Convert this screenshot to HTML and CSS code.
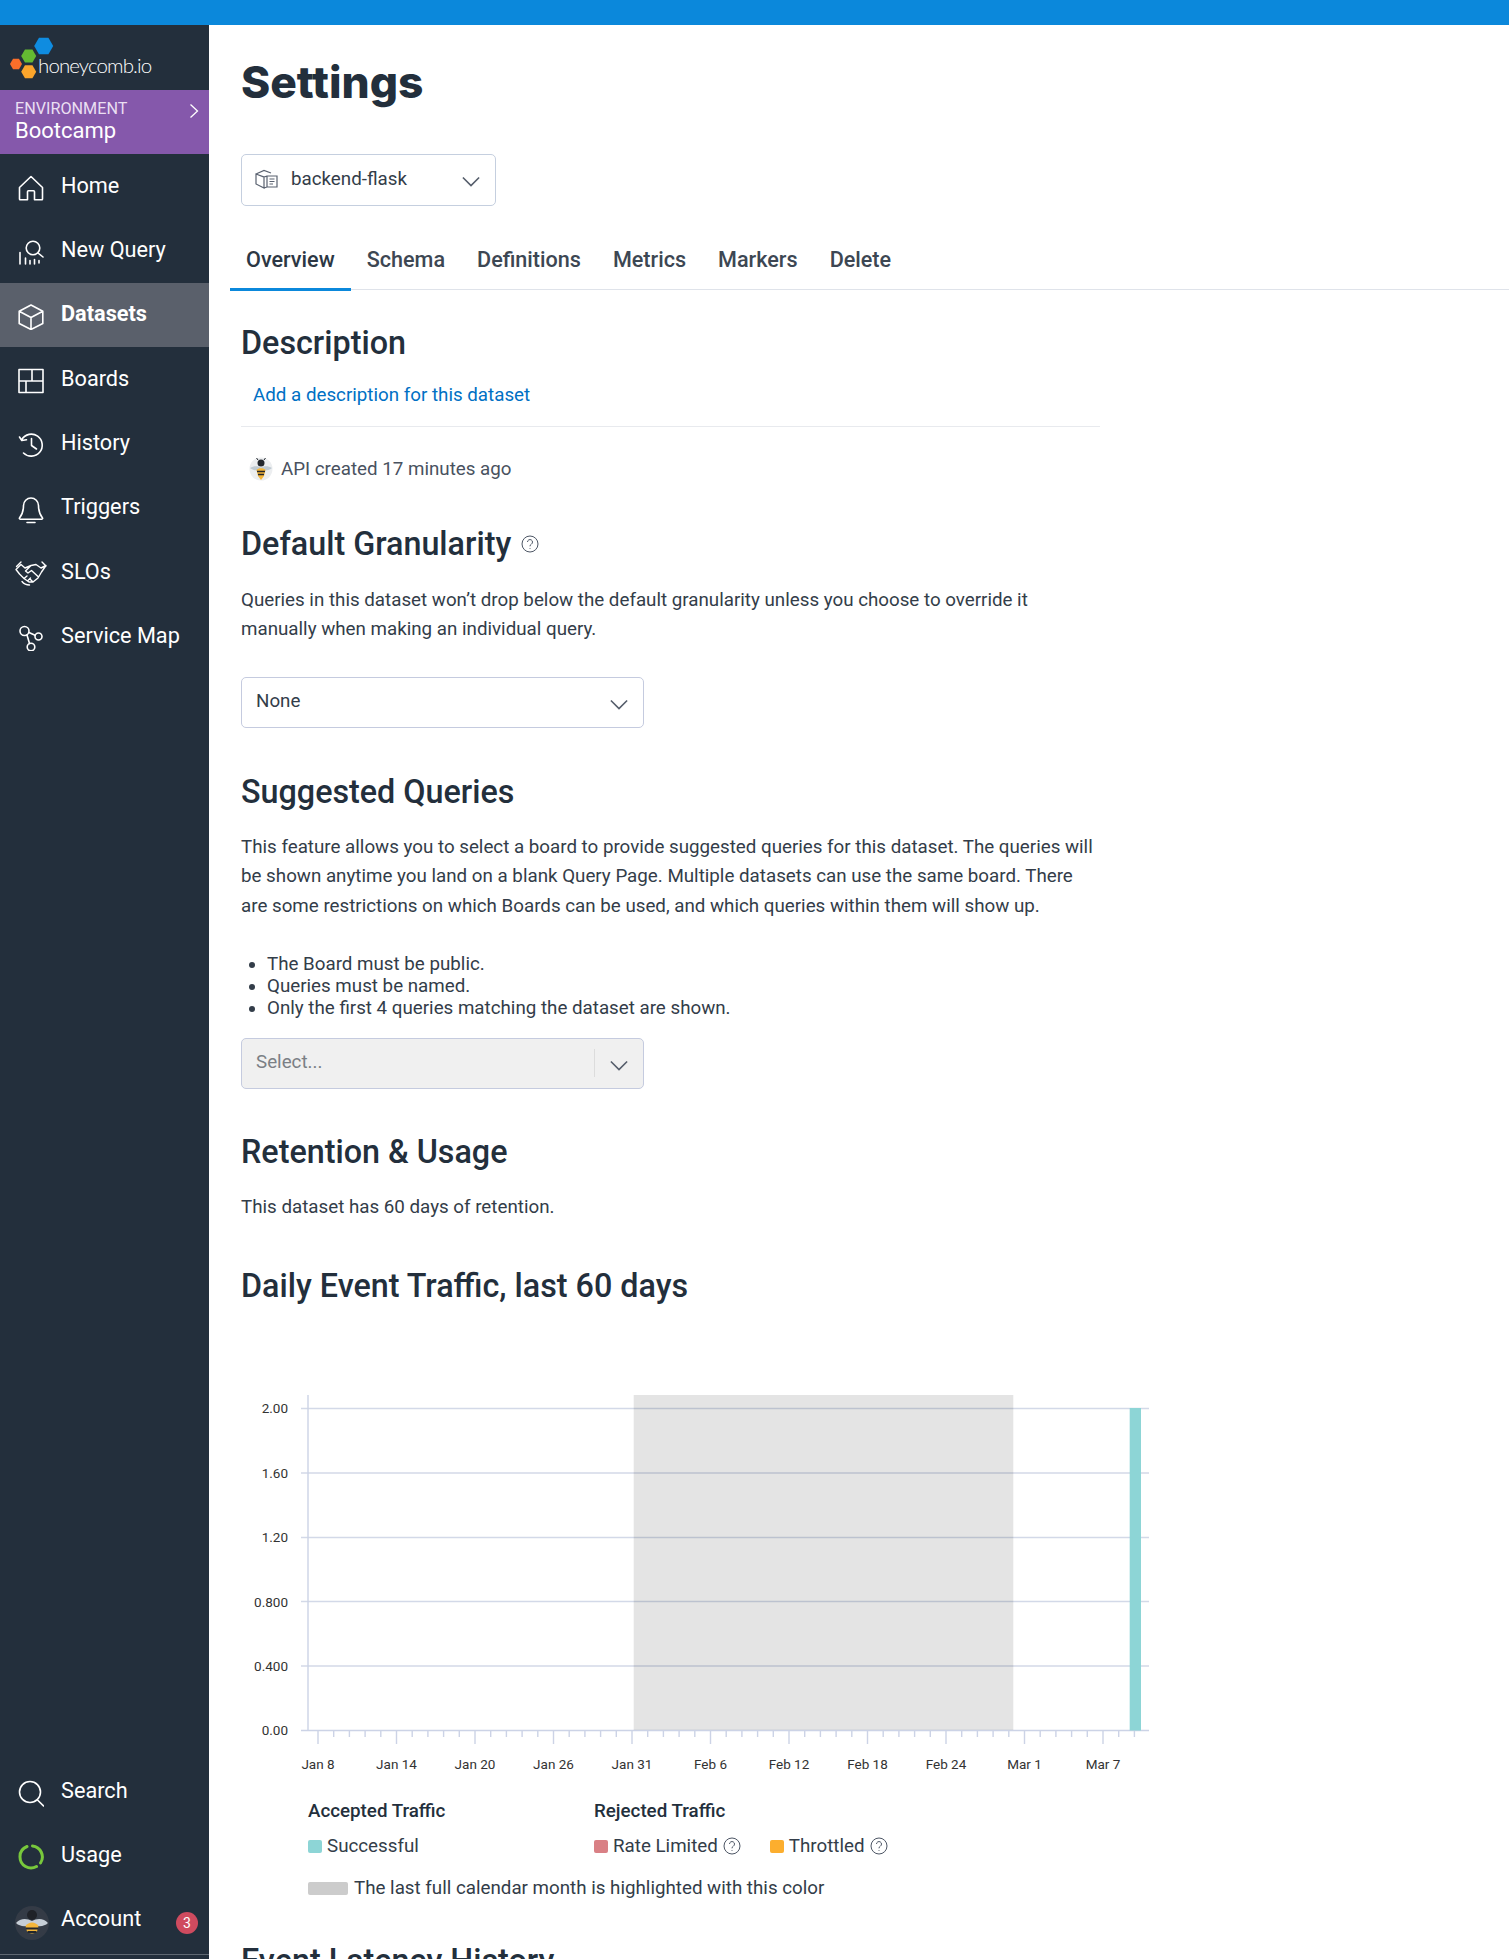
FILE: index.html
```html
<!DOCTYPE html>
<html lang="en">
<head>
    <meta charset="UTF-8">
    <meta name="viewport" content="width=device-width, initial-scale=1.0">
    <title>Settings - backend-flask</title>
    <link rel="stylesheet" href="styles.css">
</head>
<body>

<div class="top-bar"></div>

<div class="app">
    <nav class="sidebar">
        <div class="logo">
            <svg class="logo-mark" width="56" height="60" viewBox="0 0 56 60">
                <polygon points="34.200,21 38.950,12.750 48.450,12.750 53.200,21 48.450,29.250 38.950,29.250" fill="#0f8ce0"/>
                <polygon points="21.200,31 24.950,24.500 32.450,24.500 36.200,31 32.450,37.500 24.950,37.500" fill="#64ba32"/>
                <polygon points="10,39 13,33.800 19,33.800 22,39 19,44.200 13,44.200" fill="#f96e2a"/>
                <polygon points="21.200,46.700 24.950,40.200 32.450,40.200 36.200,46.700 32.450,53.200 24.950,53.200" fill="#fba52c"/>
            </svg>
            <span class="logo-text">honeycomb.io</span>
        </div>

        <div class="env">
            <div class="env-label">ENVIRONMENT</div>
            <div class="env-name">Bootcamp</div>
            <svg class="env-arrow" width="10" height="16" viewBox="0 0 10 16"><path d="M1.5 1.5 8.5 8 1.5 14.5" fill="none" stroke="#fff" stroke-width="1.3"/></svg>
        </div>

        <a class="nav-item">
            <svg class="nav-icon" width="26" height="26" viewBox="0 0 26 26"><path d="M1.5 12.5 13 1.5l11.5 11V24a.8.8 0 0 1-.8.8H16.5v-8a1 1 0 0 0-1-1h-5a1 1 0 0 0-1 1v8H2.3a.8.8 0 0 1-.8-.8Z"/></svg>
            Home
        </a>
        <a class="nav-item">
            <svg class="nav-icon" width="26" height="26" viewBox="0 0 26 26"><circle cx="15" cy="9" r="6.8"/><path d="m20 14 5 4M2 13.5V25M7.500 19v6M12 21.500V25M16.500 20.500V25M21 21.500V24"/></svg>
            New Query
        </a>
        <a class="nav-item active">
            <svg class="nav-icon" width="26" height="26" viewBox="0 0 26 26"><path d="M13 1 24.800 7.300V19.500L13 25.500 1.200 19.500V7.300ZM1.200 7.300 13 13.500 24.800 7.300M13 13.500V25.500"/></svg>
            <strong>Datasets</strong>
        </a>
        <a class="nav-item">
            <svg class="nav-icon" width="26" height="26" viewBox="0 0 26 26"><path d="M1 1.500H25V24.500H1ZM1 13H25M14 1.500V13M8 13V24.500"/></svg>
            Boards
        </a>
        <a class="nav-item">
            <svg class="nav-icon" width="26" height="26" viewBox="0 0 26 26"><path d="M3.800 7.500A11 11 0 1 1 5.500 21M1.500 5 3.800 8.500 8.500 7.800M13.500 6.500V13.500L18.500 17"/></svg>
            History
        </a>
        <a class="nav-item">
            <svg class="nav-icon" width="26" height="28" viewBox="0 0 26 28"><path d="M5.500 8.500a7.500 7.500 0 0 1 15 0c0 6.500 2 10 4 12.500a.8.8 0 0 1-.6 1.200H2.100a.8.8 0 0 1-.6-1.200c2-2.500 4-6 4-12.500ZM9 25.500H17"/></svg>
            Triggers
        </a>
        <a class="nav-item">
            <svg class="nav-icon slo-icon" width="32" height="26" viewBox="0 0 32 26"><path d="M1 9.500 6 4.500 10 8 16 5.500 21 4.500 26 8 31 5.500 26.500 12 23 18 18 22 14 22 9 18.500 4.500 14ZM16 5.500 10.500 11 13 13 16.500 10.500 23 16.500M9 18.500 12 16M13 20.500 15.500 18M18 22 15.500 19.500M6 2 1.500 6.500M27 2 31 6M7 21.500C9 24 11.500 25 14.500 25"/></svg>
            SLOs
        </a>
        <a class="nav-item">
            <svg class="nav-icon" width="26" height="26" viewBox="0 0 26 26"><circle cx="6.500" cy="6" r="4.500"/><circle cx="20.500" cy="11.500" r="3.500"/><circle cx="13" cy="22" r="3.800"/><path d="M11 7.500 17 10.300M9 10 11.500 18.500"/></svg>
            Service Map
        </a>

        <div class="nav-bottom">
            <a class="nav-item">
                <svg class="nav-icon" width="26" height="28" viewBox="0 0 26 28"><circle cx="12" cy="12" r="10.500"/><path d="m19.500 20 6 6"/></svg>
                Search
            </a>
            <a class="nav-item">
                <svg class="nav-icon usage-icon" width="26" height="26" viewBox="0 0 26 26"><path d="M14.500 2A11 11 0 0 1 22.500 19M18.500 22.500A11 11 0 0 1 2 13 11 11 0 0 1 9 2.500"/></svg>
                Usage
            </a>
            <a class="nav-item account-item">
                <svg class="avatar" width="34" height="34" viewBox="0 0 34 34">
                    <circle cx="17" cy="17" r="17" fill="#343b46"/>
                    <circle cx="17" cy="9" r="5" fill="#1f2228"/>
                    <path d="M1 17C5 12 12 12 17 15 22 12 29 12 33 17 29 21 22 21 17 18 12 21 5 21 1 17Z" fill="#c6ced6"/>
                    <path d="M10.500 20C12 18 14.500 16.500 17 16.500S22 18 23.500 20L22 25.500C20 28 14 28 12 25.500Z" fill="#f4b63a"/>
                    <path d="M11 22.500H23M12.500 26H21.500" stroke="#22262c" stroke-width="2.200"/>
                </svg>
                Account
                <span class="badge">3</span>
            </a>
        </div>
    </nav>

    <main class="content">
        <h1>Settings</h1>

        <div class="dataset-select">
            <svg class="dataset-icon" width="23" height="20" viewBox="0 0 23 20"><path d="M1 5 9 1.500 16 4M1 5V15L9 19V8ZM1 5 9 8 12 7M9 19 12 18M12 7H22V18H12ZM14.500 10H19.500M14.500 12.500H19.500M14.500 15H18"/></svg>
            <span>backend-flask</span>
            <svg class="chevron" width="18" height="11" viewBox="0 0 20 12"><path d="M1 1.500 10 10.500 19 1.500"/></svg>
        </div>

        <div class="tabs">
            <a class="tab active">Overview</a>
            <a class="tab">Schema</a>
            <a class="tab">Definitions</a>
            <a class="tab">Metrics</a>
            <a class="tab">Markers</a>
            <a class="tab">Delete</a>
        </div>

        <h2 class="description-title">Description</h2>
        <div class="add-description"><a>Add a description for this dataset</a></div>

        <div class="created-row">
            <svg width="24" height="24" viewBox="0 0 24 24">
                <circle cx="12" cy="12" r="11.500" fill="#eceef0"/>
                <circle cx="12" cy="6" r="3.500" fill="#23272d"/>
                <path d="M9 3 7.500 1M15 3 16.500 1" stroke="#23272d"/>
                <path d="M1 11C5 8.500 9 9 12 10.500 15 9 19 8.500 23 11 19 14 15 14 12 12.500 9 14 5 14 1 11Z" fill="#bfcad2"/>
                <path d="M7.500 13C9 10.500 15 10.500 16.500 13L15 19 12 23 9 19Z" fill="#f4b63a"/>
                <path d="M8 14.500H16M9 17.500H15" stroke="#23272d" stroke-width="1.600"/>
            </svg>
            <span>API created 17 minutes ago</span>
        </div>

        <h2 class="granularity-title">Default Granularity
            <svg class="help-icon big" width="18" height="18" viewBox="0 0 18 18"><circle cx="9" cy="9" r="8"/><path d="M6.500 7a2.500 2.500 0 1 1 3.800 2.200C9.400 9.800 9 10.200 9 11.300M9 13v.8"/></svg>
        </h2>
        <p class="granularity-text">Queries in this dataset won’t drop below the default granularity unless you choose to override it manually when making an individual query.</p>

        <div class="select-box granularity-select">
            <span>None</span>
            <svg class="chevron" width="18" height="11" viewBox="0 0 20 12"><path d="M1 1.500 10 10.500 19 1.500"/></svg>
        </div>

        <h2 class="suggested-title">Suggested Queries</h2>
        <p class="suggested-text">This feature allows you to select a board to provide suggested queries for this dataset. The queries will be shown anytime you land on a blank Query Page. Multiple datasets can use the same board. There are some restrictions on which Boards can be used, and which queries within them will show up.</p>
        <ul class="rules">
            <li>The Board must be public.</li>
            <li>Queries must be named.</li>
            <li>Only the first 4 queries matching the dataset are shown.</li>
        </ul>

        <div class="select-box disabled">
            <span>Select...</span>
            <i class="select-sep"></i>
            <svg class="chevron" width="18" height="11" viewBox="0 0 20 12"><path d="M1 1.500 10 10.500 19 1.500"/></svg>
        </div>

        <h2 class="retention-title">Retention &amp; Usage</h2>
        <p class="retention-text">This dataset has 60 days of retention.</p>

        <h2 class="traffic-title">Daily Event Traffic, last 60 days</h2>

        <svg class="chart" width="940" height="400" viewBox="0 0 940 400">
            <g class="grid">
                <path d="M60 28.500H908M60 93H908M60 157.500H908M60 221.500H908M60 286H908"/>
                <path class="axis" d="M67 15V351M60 350.500H908"/>
                <path class="axis" d="M77 351v13M155.500 351v13M234 351v13M312.500 351v13M391 351v13M469.500 351v13M548 351v13M626.500 351v13M705 351v13M783.500 351v13M862 351v13"/>
                <path class="axis" d="M92.700 351v6M108.400 351v6M124.100 351v6M139.800 351v6M171.200 351v6M186.900 351v6M202.600 351v6M218.300 351v6M249.700 351v6M265.400 351v6M281.100 351v6M296.800 351v6M328.200 351v6M343.900 351v6M359.600 351v6M375.300 351v6M406.700 351v6M422.400 351v6M438.100 351v6M453.800 351v6M485.200 351v6M500.900 351v6M516.600 351v6M532.300 351v6M563.700 351v6M579.400 351v6M595.100 351v6M610.800 351v6M642.200 351v6M657.900 351v6M673.600 351v6M689.300 351v6M720.700 351v6M736.400 351v6M752.100 351v6M767.800 351v6M799.200 351v6M814.900 351v6M830.600 351v6M846.300 351v6M877.700 351v6M893.400 351v6"/>
            </g>
            <rect class="month-band" x="392.700" y="15" width="379.600" height="335"/>
            <rect class="traffic-bar" x="888.700" y="28" width="11.300" height="322.500"/>
            <g class="y-labels">
                <text x="47" y="33">2.00</text>
                <text x="47" y="98">1.60</text>
                <text x="47" y="162">1.20</text>
                <text x="47" y="227">0.800</text>
                <text x="47" y="291">0.400</text>
                <text x="47" y="355">0.00</text>
            </g>
            <g class="x-labels">
                <text x="77" y="389">Jan 8</text>
                <text x="155.500" y="389">Jan 14</text>
                <text x="234" y="389">Jan 20</text>
                <text x="312.500" y="389">Jan 26</text>
                <text x="391" y="389">Jan 31</text>
                <text x="469.500" y="389">Feb 6</text>
                <text x="548" y="389">Feb 12</text>
                <text x="626.500" y="389">Feb 18</text>
                <text x="705" y="389">Feb 24</text>
                <text x="783.500" y="389">Mar 1</text>
                <text x="862" y="389">Mar 7</text>
            </g>
        </svg>

        <div class="legend">
            <div class="legend-col accepted">
                <div class="legend-title">Accepted Traffic</div>
                <div class="legend-row"><i class="swatch successful"></i>Successful</div>
            </div>
            <div class="legend-col">
                <div class="legend-title">Rejected Traffic</div>
                <div class="legend-row">
                    <i class="swatch limited"></i>Rate Limited
                    <svg class="help-icon" width="18" height="18" viewBox="0 0 18 18"><circle cx="9" cy="9" r="8"/><path d="M6.500 7a2.500 2.500 0 1 1 3.800 2.200C9.400 9.800 9 10.200 9 11.300M9 13v.8"/></svg>
                    <i class="swatch throttled"></i>Throttled
                    <svg class="help-icon" width="18" height="18" viewBox="0 0 18 18"><circle cx="9" cy="9" r="8"/><path d="M6.500 7a2.500 2.500 0 1 1 3.800 2.200C9.400 9.800 9 10.200 9 11.300M9 13v.8"/></svg>
                </div>
            </div>
        </div>
        <div class="legend-row legend-note"><i class="swatch highlight"></i>The last full calendar month is highlighted with this color</div>

        <h2 class="latency-title">Event Latency History</h2>
    </main>
</div>

</body>
</html>
```
FILE: styles.css
```css
* {
    box-sizing: border-box;
}

html, body {
    height: 100%;
}

body {
    margin: 0;
    display: flex;
    flex-direction: column;
    overflow: hidden;
    font-family: Roboto, Arial, sans-serif;
    font-size: 18.75px;
    color: #333d49;
    background-color: #fff;
}

.top-bar {
    height: 25px;
    flex: none;
    background-color: #0b88db;
}

.app {
    display: flex;
    flex: 1;
    min-height: 0;
}

/* Sidebar */
.sidebar {
    width: 209px;
    flex: none;
    display: flex;
    flex-direction: column;
    color: #fff;
    background-color: #232f3c;
}

.logo {
    position: relative;
    height: 65px;
    flex: none;
}

.logo-mark {
    position: absolute;
    left: 0;
    top: 0;
}

.logo-text {
    position: absolute;
    left: 38px;
    top: 26px;
    font-family: Lato, sans-serif;
    font-size: 20.5px;
    font-weight: 300;
    letter-spacing: -0.9px;
    line-height: 28px;
}

.env {
    position: relative;
    height: 64px;
    flex: none;
    padding: 9px 15px 0;
    background-color: #8558ab;
}

.env-label {
    font-size: 16.2px;
    line-height: 20px;
    color: #eadff2;
}

.env-name {
    font-size: 22px;
    line-height: 23px;
}

.env-arrow {
    position: absolute;
    right: 10px;
    top: 13px;
}

.nav-item {
    display: flex;
    align-items: center;
    height: 64.33px;
    flex: none;
    padding: 0 0 2px 61px;
    font-size: 21.7px;
    position: relative;
}

.nav-item.active {
    background-color: #5a606b;
}

.nav-item strong {
    font-weight: 700;
}

.nav-icon {
    position: absolute;
    left: 18px;
    top: 21px;
    fill: none;
    stroke: #fff;
    stroke-width: 1.6;
    stroke-linecap: round;
    stroke-linejoin: round;
}

.slo-icon {
    left: 15px;
    top: 20px;
    stroke-width: 1.4;
}

.usage-icon {
    stroke: #78c83c;
    stroke-width: 3;
}

.nav-bottom {
    margin-top: auto;
    padding-bottom: 3px;
    border-bottom: 1px solid #5f6872;
    margin-bottom: 4px;
}

.nav-bottom .nav-item {
    height: 64px;
}

.avatar {
    position: absolute;
    left: 15px;
    top: 19px;
}

.badge {
    position: absolute;
    left: 176px;
    top: 25px;
    width: 22px;
    height: 22px;
    border-radius: 50%;
    font-size: 14px;
    line-height: 22px;
    text-align: center;
    background-color: #cf4b5f;
}

/* Main content */
.content {
    flex: 1;
    min-width: 0;
    padding-left: 32px;
    overflow: hidden;
}

h1 {
    margin: 29px 0 44px;
    font-family: Inter, Arial, sans-serif;
    font-size: 44.3px;
    font-weight: 800;
    line-height: 56px;
    color: #232f3c;
}

h2 {
    margin: 0;
    font-size: 32.3px;
    font-weight: 500;
    line-height: 40px;
    color: #232f3c;
}

p {
    margin: 0;
    width: 860px;
    line-height: 29.7px;
}

.dataset-select {
    display: flex;
    align-items: center;
    width: 255px;
    height: 52px;
    padding: 0 0 2px 13px;
    border: 1px solid #c5cfdf;
    border-radius: 5px;
    position: relative;
}

.dataset-icon {
    fill: none;
    stroke: #5a6270;
    stroke-width: 1.2;
    margin-right: 13px;
}

.chevron {
    position: absolute;
    right: 15px;
    top: 21px;
    fill: none;
    stroke: #555d6b;
    stroke-width: 1.8;
}

.tabs {
    display: flex;
    height: 55px;
    margin: 29px 0 0 -11px;
    border-bottom: 1px solid #dfe3ea;
}

.tab {
    height: 56px;
    padding: 0 16px;
    font-size: 21.6px;
    font-weight: 500;
    line-height: 50px;
    color: #3d4753;
}

.tab.active {
    color: #2c3744;
    border-bottom: 3px solid #0b88db;
}

.description-title {
    margin-top: 33px;
}

.add-description {
    width: 859px;
    margin-top: 18px;
    padding: 0 0 16px 12px;
    line-height: 29px;
    border-bottom: 1px solid #e8eaee;
    color: #0070c4;
}

.created-row {
    display: flex;
    align-items: center;
    gap: 8px;
    height: 29px;
    margin: 27px 0 0 8px;
    color: #49525f;
}

.granularity-title {
    display: flex;
    align-items: center;
    gap: 10px;
    margin-top: 41px;
}

.help-icon {
    flex: none;
    fill: none;
    stroke: #4c5564;
    stroke-width: 1;
}

.granularity-text {
    margin-top: 22px;
    line-height: 29px;
}

.select-box {
    position: relative;
    display: flex;
    align-items: center;
    width: 403px;
    height: 51px;
    padding: 0 0 3px 14px;
    border: 1px solid #c5cbdf;
    border-radius: 5px;
}

.select-box.disabled {
    color: #7b7f85;
    background-color: #f0f0f0;
}

.select-sep {
    position: absolute;
    left: 352px;
    top: 10px;
    width: 1px;
    height: 28px;
    background-color: #dcdcdc;
}

.granularity-select {
    margin-top: 33px;
}

.suggested-title {
    margin-top: 43.5px;
}

.suggested-text {
    margin-top: 21px;
}

.rules {
    margin: 31px 0 19px;
    padding-left: 26px;
    line-height: 22px;
}

.retention-title {
    margin-top: 43px;
}

.retention-text {
    margin-top: 21px;
}

.traffic-title {
    margin-top: 44px;
}

/* Chart */
.chart {
    display: block;
    margin-top: 74px;
    font-size: 13.5px;
}

.grid path {
    fill: none;
    stroke: #d3d9e8;
    stroke-width: 1.4;
}

.grid .axis {
    stroke: #ccd3e6;
}

.month-band {
    fill: rgba(0, 0, 0, 0.105);
}

.traffic-bar {
    fill: #8dd5d6;
}

.y-labels text {
    text-anchor: end;
    fill: #333;
}

.x-labels text {
    text-anchor: middle;
    fill: #333;
}

/* Legend */
.legend {
    display: flex;
    margin: 19px 0 0 67px;
}

.legend-col.accepted {
    width: 286px;
}

.legend-title {
    font-weight: 500;
    line-height: 24px;
    color: #232f3c;
}

.legend-row {
    display: flex;
    align-items: center;
    margin-top: 11px;
    line-height: 24px;
}

.legend-row .help-icon {
    margin: 0 29px 0 5px;
}

.legend-row .help-icon:last-child {
    margin-right: 0;
}

.swatch {
    width: 14px;
    height: 13px;
    margin-right: 5px;
    border-radius: 2px;
}

.swatch.successful {
    background-color: #8dd5d6;
}

.swatch.limited {
    background-color: #d98085;
}

.swatch.throttled {
    background-color: #fcae2e;
}

.legend-note {
    margin: 18px 0 0 67px;
}

.swatch.highlight {
    width: 40px;
    background-color: #cccccc;
    margin-right: 6px;
}

.latency-title {
    margin-top: 41px;
}
```
